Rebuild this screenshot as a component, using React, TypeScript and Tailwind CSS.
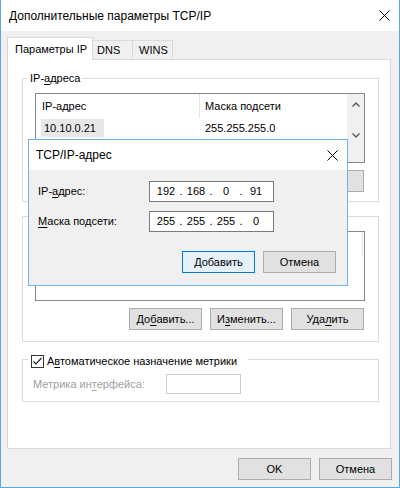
import type { ReactNode } from "react";

function U({ c }: { c: string }) {
  return <span className="underline decoration-1 underline-offset-2">{c}</span>;
}

function Btn({ children, primary }: { children?: ReactNode; primary?: boolean }) {
  return (
    <div
      className={`flex h-[22px] w-[73px] items-center justify-center border ${
        primary ? "border-[#0078d7] bg-[#e5f1fb]" : "border-[#adadad] bg-[#e1e1e1]"
      }`}
    >
      {children}
    </div>
  );
}

function CloseIcon() {
  return (
    <svg width="11" height="11" viewBox="0 0 11 11" className="shrink-0">
      <path d="M0.5 0.5 L10.5 10.5 M10.5 0.5 L0.5 10.5" stroke="#000" strokeWidth="1" />
    </svg>
  );
}

function Chevron({ down }: { down?: boolean }) {
  return (
    <svg width="8" height="5" viewBox="0 0 8 5">
      <path
        d={down ? "M0.5 0.5 L4 4 L7.5 0.5" : "M0.5 4.5 L4 1 L7.5 4.5"}
        stroke="#606060"
        strokeWidth="1.5"
        fill="none"
      />
    </svg>
  );
}

function IpField({ parts }: { parts: string[] }) {
  return (
    <div className="flex h-[21px] w-[125px] items-center border border-[#7a7a7a] bg-white pl-[4px]">
      {parts.map((p, i) => (
        <div key={i} className="flex items-center">
          {i > 0 && <span className="w-[6px] text-center">.</span>}
          <span className="w-[24px] text-center">{p}</span>
        </div>
      ))}
    </div>
  );
}

export default function App() {
  return (
    <div className="relative h-[488px] w-[400px] overflow-hidden border-x border-b border-[#5aa6ee] bg-[#f0f0f0] font-['Liberation_Sans',Arial,sans-serif] text-[11px] leading-none text-black">
      {/* title bar */}
      <div className="flex h-[31px] items-center justify-between bg-white pl-2 pr-[9px]">
        <span className="text-[12px]">Дополнительные параметры TCP/IP</span>
        <CloseIcon />
      </div>

      {/* tabs */}
      <div className="ml-[6px] mt-[6px] flex h-[22px] items-end">
        <div className="relative z-10 -mb-px flex h-[23px] w-[86px] items-center border-x border-t border-[#d9d9d9] bg-white pl-[7px]">
          Параметры IP
        </div>
        <div className="flex h-[19px] w-[40px] items-center border-r border-t border-[#d9d9d9] pl-[4px]">DNS</div>
        <div className="flex h-[19px] w-[40px] items-center border-r border-t border-[#d9d9d9] pl-[6px]">WINS</div>
      </div>

      {/* tab panel */}
      <div className="ml-[6px] h-[390px] w-[384px] border border-[#d9d9d9] bg-white">
        {/* IP addresses */}
        <div className="relative ml-[14px] mt-[18px] h-[124px] w-[357px] border border-[#dcdcdc] pl-[12px] pt-[14px]">
          <div className="absolute -top-[9px] left-[5px] bg-white px-[2px] leading-[16px]">
            IP-<U c="а" />дреса
          </div>
          <div className="flex h-[70px] w-[330px] border border-[#828790] bg-white">
            <div className="flex-1">
              <div className="flex h-[24px] items-center">
                <div className="w-[163px] pl-[6px]">IP-адрес</div>
                <div className="h-full w-px bg-[#e5e5e5]" />
                <div className="pl-[5px]">Маска подсети</div>
              </div>
              <div className="mt-px flex h-[18px] items-center">
                <div className="ml-[5px] flex h-full w-[63px] items-center bg-[#e8e8e8] pl-[3px]">10.10.0.21</div>
                <div className="ml-[101px]">255.255.255.0</div>
              </div>
            </div>
            <div className="flex w-[17px] flex-col items-center bg-[#f0f0f0] pt-[8px]">
              <Chevron />
              <div className="mt-[26px]">
                <Chevron down />
              </div>
            </div>
          </div>
          {/* buttons mostly hidden under the address window */}
          <div className="mt-[7px] flex w-[329px] justify-end gap-2">
            <Btn />
            <Btn />
            <Btn />
          </div>
        </div>

        {/* gateways (legend and header hidden under the address window) */}
        <div className="ml-[14px] mt-[14px] h-[126px] w-[357px] border border-[#dcdcdc] pl-[12px] pt-[14px]">
          <div className="h-[70px] w-[330px] border border-[#828790] bg-white">
            <div className="flex h-[25px] justify-end pr-px">
              <div className="h-full w-px bg-[#e5e5e5]" />
            </div>
          </div>
          <div className="mt-[7px] flex w-[329px] justify-end gap-2">
            <Btn>
              До<U c="б" />авить...
            </Btn>
            <Btn>
              И<U c="з" />менить...
            </Btn>
            <Btn>
              Уда<U c="л" />ить
            </Btn>
          </div>
        </div>

        {/* metric */}
        <div className="relative ml-[14px] mt-[17px] h-[43px] w-[357px] border border-[#dcdcdc] pl-[10px] pt-[14px]">
          <div className="absolute -top-[5px] left-[5px] flex h-[13px] items-center bg-white pl-[3px] pr-[11px]">
            <div className="flex h-[13px] w-[13px] items-center justify-center border border-[#333333] bg-white">
              <svg width="11" height="11" viewBox="0 0 11 11">
                <path d="M1.5 5.5 L4 8 L9.5 2" stroke="#222" strokeWidth="1.2" fill="none" />
              </svg>
            </div>
            <span className="ml-[3px]">
              А<U c="в" />томатическое назначение метрики
            </span>
          </div>
          <div className="flex items-center">
            <div className="w-[133px] text-[#a0a0a0]">
              Метрика ин<U c="т" />ерфейса:
            </div>
            <div className="h-[20px] w-[75px] border border-[#cccccc] bg-white" />
          </div>
        </div>
      </div>

      {/* dialog buttons */}
      <div className="mt-[9px] flex justify-end gap-2 pr-[7px]">
        <Btn>OK</Btn>
        <Btn>Отмена</Btn>
      </div>

      {/* TCP/IP address window */}
      <div className="absolute left-[27px] top-[139px] h-[147px] w-[320px] border border-[#6eb2ee] bg-[#f0f0f0]">
        <div className="flex h-[30px] items-center justify-between bg-white pl-[7px] pr-[9px]">
          <span className="text-[12px]">TCP/IP-адрес</span>
          <CloseIcon />
        </div>
        <div className="pl-[9px] pt-[11px]">
          <div className="flex items-center">
            <div className="w-[111px]">
              IP-<U c="а" />дрес:
            </div>
            <IpField parts={["192", "168", "0", "91"]} />
          </div>
          <div className="mt-[9px] flex items-center">
            <div className="w-[111px]">
              <U c="М" />аска подсети:
            </div>
            <IpField parts={["255", "255", "255", "0"]} />
          </div>
        </div>
        <div className="mt-[19px] flex justify-end gap-2 pr-[11px]">
          <Btn primary>
            <U c="Д" />обавить
          </Btn>
          <Btn>Отмена</Btn>
        </div>
      </div>
    </div>
  );
}
